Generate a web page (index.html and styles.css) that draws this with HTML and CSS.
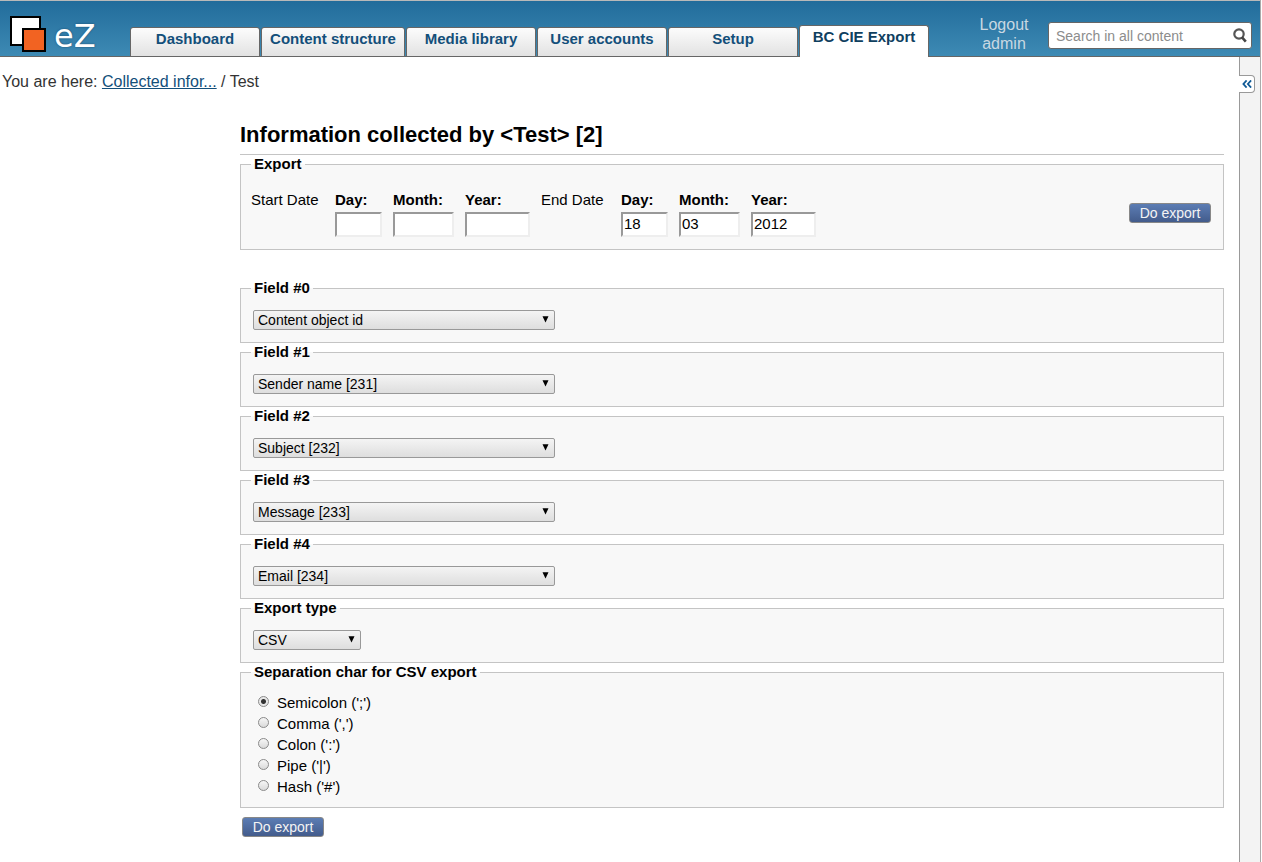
FILE: index.html
```
<!DOCTYPE html>
<html lang="en">
<head>
<meta charset="utf-8">
<title>Information collected by Test</title>
<link rel="stylesheet" href="styles.css">
</head>
<body>
<div class="page">
  <header class="header">
    <a class="logo" href="#" aria-label="eZ">
      <svg class="logo-mark" width="38" height="38" viewBox="0 0 38 38" aria-hidden="true">
        <rect x="2" y="2" width="29" height="28" fill="#fff" stroke="#000" stroke-width="2"/>
        <rect x="14" y="14" width="22" height="22" fill="#f26322" stroke="#000" stroke-width="2"/>
      </svg>
      <span class="logo-text">eZ</span>
    </a>
    <nav class="tabs">
      <a class="tab" href="#">Dashboard</a>
      <a class="tab tab-wide" href="#">Content structure</a>
      <a class="tab" href="#">Media library</a>
      <a class="tab" href="#">User accounts</a>
      <a class="tab" href="#">Setup</a>
      <a class="tab tab-active" href="#">BC CIE Export</a>
    </nav>
    <div class="user">
      <a href="#">Logout</a>
      <a href="#">admin</a>
    </div>
    <form class="search">
      <input class="search-input" type="text" placeholder="Search in all content" aria-label="Search in all content">
      <button class="search-button" type="button" aria-label="Search">
        <svg width="14" height="15" viewBox="0 0 14 15" aria-hidden="true">
          <circle cx="6" cy="6" r="4.7" fill="none" stroke="#555" stroke-width="2.2"/>
          <path d="M8.8 9.2 L12.8 13.6" stroke="#444" stroke-width="2.6"/>
        </svg>
      </button>
    </form>
  </header>

  <div class="body">
    <div class="main">
      <p class="path">You are here: <a href="#">Collected infor...</a> / Test</p>
      <form class="content">
        <h1 class="title">Information collected by &lt;Test&gt; [2]</h1>

        <fieldset class="group group-export">
          <legend>Export</legend>
          <div class="dates">
            <span class="date-name date-start">Start Date</span>
            <label class="date">Day:<input class="w-day" type="text"></label>
            <label class="date">Month:<input class="w-month" type="text"></label>
            <label class="date">Year:<input class="w-year" type="text"></label>
            <span class="date-name date-end">End Date</span>
            <label class="date">Day:<input class="w-day" type="text" value="18"></label>
            <label class="date">Month:<input class="w-month" type="text" value="03"></label>
            <label class="date">Year:<input class="w-year" type="text" value="2012"></label>
            <button class="button button-right" type="button">Do export</button>
          </div>
        </fieldset>

        <fieldset class="group">
          <legend>Field #0</legend>
          <div class="select">
            <select aria-label="Field #0"><option>Content object id</option></select>
            <svg width="7" height="7" viewBox="0 0 7 7" aria-hidden="true"><path d="M0.5 0.3 H6.5 L3.5 6.5 Z"/></svg>
          </div>
        </fieldset>
        <fieldset class="group">
          <legend>Field #1</legend>
          <div class="select">
            <select aria-label="Field #1"><option>Sender name [231]</option></select>
            <svg width="7" height="7" viewBox="0 0 7 7" aria-hidden="true"><path d="M0.5 0.3 H6.5 L3.5 6.5 Z"/></svg>
          </div>
        </fieldset>
        <fieldset class="group">
          <legend>Field #2</legend>
          <div class="select">
            <select aria-label="Field #2"><option>Subject [232]</option></select>
            <svg width="7" height="7" viewBox="0 0 7 7" aria-hidden="true"><path d="M0.5 0.3 H6.5 L3.5 6.5 Z"/></svg>
          </div>
        </fieldset>
        <fieldset class="group">
          <legend>Field #3</legend>
          <div class="select">
            <select aria-label="Field #3"><option>Message [233]</option></select>
            <svg width="7" height="7" viewBox="0 0 7 7" aria-hidden="true"><path d="M0.5 0.3 H6.5 L3.5 6.5 Z"/></svg>
          </div>
        </fieldset>
        <fieldset class="group">
          <legend>Field #4</legend>
          <div class="select">
            <select aria-label="Field #4"><option>Email [234]</option></select>
            <svg width="7" height="7" viewBox="0 0 7 7" aria-hidden="true"><path d="M0.5 0.3 H6.5 L3.5 6.5 Z"/></svg>
          </div>
        </fieldset>
        <fieldset class="group">
          <legend>Export type</legend>
          <div class="select select-small">
            <select aria-label="Export type"><option>CSV</option></select>
            <svg width="7" height="7" viewBox="0 0 7 7" aria-hidden="true"><path d="M0.5 0.3 H6.5 L3.5 6.5 Z"/></svg>
          </div>
        </fieldset>
        <fieldset class="group group-radios">
          <legend>Separation char for CSV export</legend>
          <label class="radio"><input type="radio" name="sep" checked>Semicolon (';')</label>
          <label class="radio"><input type="radio" name="sep">Comma (',')</label>
          <label class="radio"><input type="radio" name="sep">Colon (':')</label>
          <label class="radio"><input type="radio" name="sep">Pipe ('|')</label>
          <label class="radio"><input type="radio" name="sep">Hash ('#')</label>
        </fieldset>
        <button class="button button-bottom" type="button">Do export</button>
      </form>
    </div>
    <aside class="rail">
      <button class="rail-toggle" type="button" aria-label="Show panel">
        <svg width="10" height="8" viewBox="0 0 10 8" aria-hidden="true">
          <path d="M4.6 0.4 L1.4 4 L4.6 7.6 M9.1 0.4 L5.9 4 L9.1 7.6" fill="none" stroke="#0f5a96" stroke-width="1.8"/>
        </svg>
      </button>
    </aside>
  </div>
</div>
</body>
</html>
```
FILE: styles.css
```
* {
  box-sizing: border-box;
}

body {
  margin: 0;
  background: #fff;
  color: #000;
  font-family: "Liberation Sans", Arial, sans-serif;
  font-size: 15px;
  line-height: 18px;
}

button,
input,
select {
  font-family: inherit;
}

.page {
  display: flex;
  flex-direction: column;
  min-height: 100vh;
  margin-right: 1px;
  border-right: 1px solid #aaa;
}

.header {
  display: flex;
  height: 57px;
  border-top: 1px solid #b9b9b9;
  border-bottom: 1px solid #666;
  background: linear-gradient(#226c9b, #3d8ab4);
}

.logo {
  display: flex;
  width: 130px;
  padding: 14px 0 0 9px;
  gap: 7px;
  text-decoration: none;
}

.logo-text {
  padding-top: 4px;
  color: #fff;
  font-family: "DejaVu Sans", sans-serif;
  font-size: 32px;
  line-height: 34px;
  text-shadow: 0 0 2px #17486b;
}

.tabs {
  display: flex;
  align-items: flex-end;
  gap: 1px;
  margin-bottom: -1px;
}

.tab {
  width: 130px;
  height: 30px;
  padding-top: 2px;
  border: 1px solid #666;
  border-radius: 3px 3px 0 0;
  background: linear-gradient(#fcfcfc, #e2e2e2);
  color: #134f7a;
  font-weight: bold;
  text-align: center;
  text-decoration: none;
}

.tab-wide {
  width: 144px;
}

.tab-active {
  height: 32px;
  border-bottom: 0;
  background: #fff;
  color: #0f405f;
}

.user {
  display: flex;
  flex-direction: column;
  width: 60px;
  margin: 14px 14px 0 auto;
  font-size: 16px;
  line-height: 19px;
  text-align: center;
}

.user a {
  color: #c9d8e2;
  text-decoration: none;
}

.search {
  display: flex;
  align-items: center;
  width: 204px;
  height: 27px;
  margin: 21px 8px 0 0;
  padding-right: 4px;
  border: 1px solid #666;
  border-radius: 3px;
  background: #fff;
}

.search-input {
  flex: 1;
  min-width: 0;
  padding: 0 0 0 7px;
  border: 0;
  background: none;
  font-size: 14px;
  outline: 0;
}

.search-input::placeholder {
  color: #8c8c8c;
}

.search-button {
  display: flex;
  padding: 0;
  border: 0;
  background: none;
}

.body {
  display: flex;
  flex: 1;
}

.main {
  flex: 1;
  padding: 16px 15px 0 0;
}

.path {
  margin: 0 0 0 2px;
  color: #333;
  font-size: 16px;
}

.path a {
  color: #134f7a;
}

.content {
  margin: 30px 0 0 240px;
}

.title {
  margin: 0 0 1px;
  padding-bottom: 6px;
  border-bottom: 1px solid #c4c4c4;
  font-size: 22px;
  line-height: 27px;
}

.group {
  min-width: 0;
  margin: 0 0 1px;
  padding: 13px 12px 12px;
  border: 1px solid #c4c4c4;
  background: #f8f8f8;
}

.group legend {
  margin-left: -2px;
  padding: 0 3px 2px;
  font-weight: bold;
  line-height: 15px;
}

.group-export {
  margin-bottom: 30px;
  padding-top: 18px;
}

.dates {
  display: flex;
  align-items: flex-start;
  margin-left: -2px;
}

.date-start {
  width: 84px;
}

.date-end {
  width: 80px;
}

.date {
  display: flex;
  flex-direction: column;
  gap: 3px;
  margin-right: 11px;
  font-weight: bold;
}

.date input {
  height: 25px;
  padding: 0 1px 2px;
  border: 2px solid;
  border-color: #999 #eee #eee #999;
  background: #fff;
  font-size: 15px;
}

.w-day {
  width: 47px;
}

.w-month {
  width: 61px;
}

.w-year {
  width: 65px;
}

.button {
  width: 82px;
  height: 20px;
  padding: 0;
  border: 1px solid #888;
  border-radius: 3px;
  background: linear-gradient(#5c7db4, #435c8c);
  color: #f4f4f4;
  font-size: 14px;
  line-height: 18px;
}

.button-right {
  margin: 12px 0 0 auto;
}

.button-bottom {
  display: block;
  margin: 9px 0 24px 2px;
}

.select {
  display: grid;
  width: 302px;
}

.select-small {
  width: 108px;
}

.select select,
.select svg {
  grid-area: 1 / 1;
}

.select select {
  height: 20px;
  padding: 0 20px 0 4px;
  border: 1px solid #999;
  border-radius: 2px;
  background: linear-gradient(#f4f4f4, #dedede);
  color: #000;
  font-size: 14px;
  appearance: none;
}

.select svg {
  justify-self: end;
  margin: 6px 6px 0 0;
  pointer-events: none;
}

.group-radios {
  padding-top: 11px;
  padding-bottom: 10px;
}

.radio {
  display: flex;
  align-items: center;
  gap: 8px;
  width: max-content;
  height: 21px;
}

.radio input {
  width: 11px;
  height: 11px;
  margin: 0 0 2px 5px;
  border: 1px solid #8a8a8a;
  border-radius: 50%;
  background: linear-gradient(#f6f6f6, #dadada);
  appearance: none;
}

.radio input:checked {
  background: radial-gradient(circle, #333 0 2px, #e8e8e8 3px);
}

.rail {
  width: 21px;
  border-left: 1px solid #999;
  background: #f3f3f3;
}

.rail-toggle {
  display: flex;
  align-items: center;
  justify-content: center;
  width: 16px;
  height: 18px;
  margin: 18px 0 0 -1px;
  padding: 0;
  border: 1px solid #999;
  border-left: 0;
  border-radius: 0 4px 4px 0;
  background: #fff;
}
```
